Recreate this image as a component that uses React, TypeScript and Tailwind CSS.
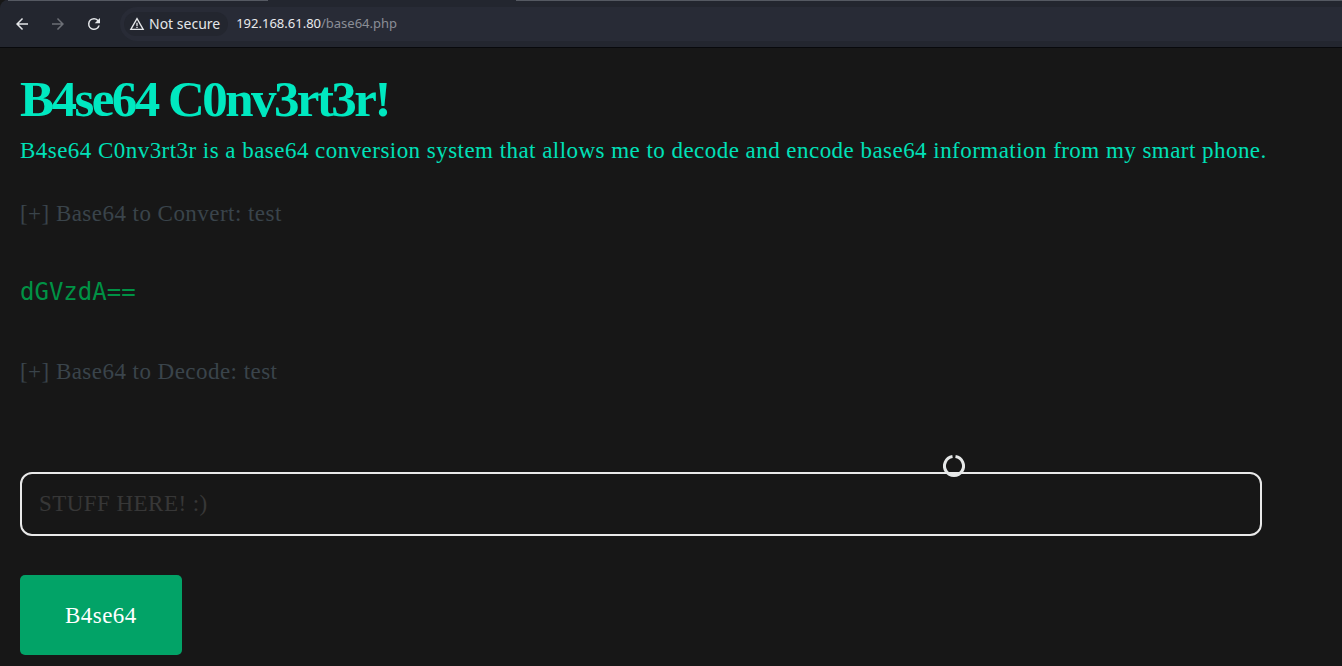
import { useState } from "react";
import type { ReactNode } from "react";

const ICON_ARROW = "M20 11H7.83l5.59-5.59L12 4l-8 8 8 8 1.41-1.41L7.83 13H20v-2z";
const ICON_RELOAD =
  "M17.65 6.35A7.96 7.96 0 0 0 12 4a8 8 0 1 0 7.73 10h-2.08A6 6 0 1 1 12 6c1.66 0 3.14.69 4.22 1.78L13 11h7V4l-2.35 2.35z";
const ICON_WARNING =
  "M1 21h22L12 2 1 21zm3.47-2L12 5.99 19.53 19H4.47zM11 10h2v5h-2v-5zm0 6h2v2h-2v-2z";

function Icon({ path, className }: { path: string; className: string }) {
  return (
    <svg viewBox="0 0 24 24" fill="currentColor" className={className} aria-hidden="true">
      <path d={path} />
    </svg>
  );
}

function ToolbarButton({ label, disabled, children }: { label: string; disabled?: boolean; children: ReactNode }) {
  return (
    <button
      type="button"
      aria-label={label}
      disabled={disabled}
      className="flex size-7 items-center justify-center rounded-full text-[#e4e6e9] disabled:text-[#6c6f76]"
    >
      {children}
    </button>
  );
}

function BrowserBar() {
  return (
    <header className="flex h-12 flex-col overflow-hidden rounded-tl-lg border-b border-[#08090c] bg-[#23262f] font-['Noto_Sans',sans-serif]">
      <div className="flex h-px justify-between bg-[#23262f]">
        <span className="ml-2 w-65 bg-[#555962]" />
        <span className="ml-62 flex-1 bg-[#555962]" />
      </div>
      <nav className="flex flex-1 items-center gap-2 pl-2">
        <ToolbarButton label="Back">
          <Icon path={ICON_ARROW} className="size-[18px]" />
        </ToolbarButton>
        <ToolbarButton label="Forward" disabled>
          <Icon path={ICON_ARROW} className="size-[18px] rotate-180" />
        </ToolbarButton>
        <ToolbarButton label="Reload">
          <Icon path={ICON_RELOAD} className="size-[18px]" />
        </ToolbarButton>
        <div className="ml-1 flex h-[34px] flex-1 items-center gap-2 rounded-l-full bg-[#282b36] pl-1">
          <button
            type="button"
            className="flex h-6 items-center gap-1 rounded-full bg-[#23262f] pr-2 pl-[5px] text-sm text-[#e4e6e9]"
          >
            <Icon path={ICON_WARNING} className="size-4" />
            Not secure
          </button>
          <span className="text-[13px] text-[#8b8e96]">
            <span className="text-[#e8eaed]">192.168.61.80</span>/base64.php
          </span>
        </div>
      </nav>
    </header>
  );
}

function BusyCursor() {
  return (
    <svg viewBox="0 0 22 22" className="absolute -top-[17px] left-[923px] size-[22px]" aria-hidden="true">
      <path d="M12.5 1.6a9.5 9.5 0 1 1-3 0" fill="none" stroke="#e6e8e8" strokeWidth="3" />
    </svg>
  );
}

export default function App() {
  const [value, setValue] = useState("");

  return (
    <div className="min-h-screen bg-[#171717] font-['Liberation_Serif',serif]">
      <BrowserBar />
      <main className="pt-[23px] pr-20 pb-2 pl-5 text-[23px] leading-[31px] tracking-[0.02em] text-[#3a444b]">
        <h1 className="text-[51px] leading-14 font-bold tracking-tighter text-[#00e8c0]">B4se64 C0nv3rt3r!</h1>
        <p className="mt-2 whitespace-nowrap text-[#00e0b8]">
          B4se64 C0nv3rt3r is a base64 conversion system that allows me to decode and encode base64 information from my
          smart phone.
        </p>
        <p className="mt-8">[+] Base64 to Convert: test</p>
        <output className="mt-12 block font-['DejaVu_Sans_Mono',monospace] text-2xl leading-[31px] tracking-normal text-[#009245]">
          dGVzdA==
        </output>
        <p className="mt-12">[+] Base64 to Decode: test</p>
        <form className="mt-[85px]" onSubmit={(event) => event.preventDefault()}>
          <div className="relative">
            <input
              type="text"
              name="payload"
              aria-label="Text to convert"
              placeholder="STUFF HERE! :)"
              value={value}
              onChange={(event) => setValue(event.target.value)}
              className="block h-16 w-full rounded-xl border-2 border-[#e9e9e9] bg-transparent px-[17px] tracking-[0.02em] text-[#e9e9e9] outline-none placeholder:text-[#373737]"
            />
            <BusyCursor />
          </div>
          <button
            type="submit"
            className="mt-[39px] block h-20 rounded-[5px] bg-[#02a367] px-[45px] tracking-[0.02em] text-white"
          >
            B4se64
          </button>
        </form>
      </main>
    </div>
  );
}
